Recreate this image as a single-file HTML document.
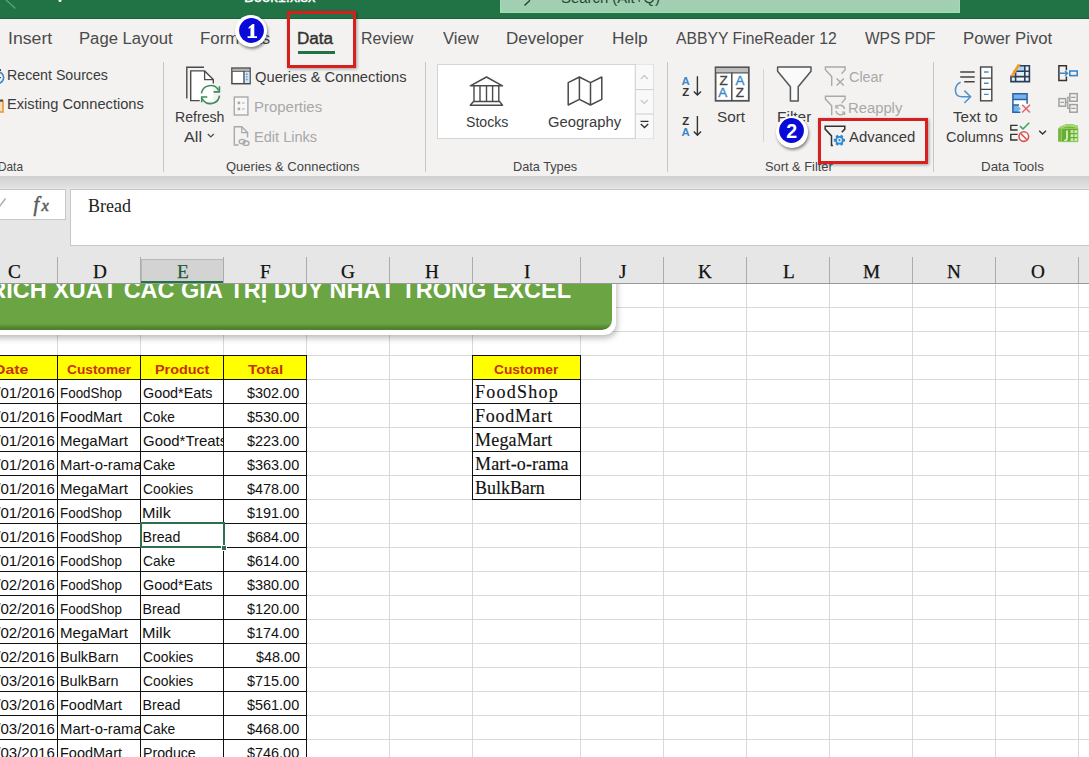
<!DOCTYPE html>
<html><head><meta charset="utf-8"><style>
*{margin:0;padding:0;box-sizing:border-box}
html,body{width:1089px;height:757px;overflow:hidden;background:#fff;font-family:"Liberation Sans",sans-serif}
body{position:relative}
.a{position:absolute;white-space:nowrap}
.tab{font-size:16.5px;color:#444;line-height:20px}
.lbl{font-size:15px;color:#3b3b3b;line-height:18px}
.dis{color:#a8a8a8}
.grp{font-size:13px;color:#444;line-height:16px}
.cell{font-size:13.3px;color:#111;line-height:24px;height:24px;overflow:hidden;padding-top:2px}
.ser{font-family:"Liberation Serif",serif}
</style></head><body>
<div class="a" style="left:0px;top:0px;width:1089px;height:18px;background:#217346"></div>
<div class="a" style="left:0px;top:18px;width:1089px;height:1px;background:#235c3c"></div>
<div class="a" style="left:243.82px;top:-3.20px;font-family:'Liberation Sans',sans-serif;font-size:15px;line-height:0;color:#fff;transform:scaleX(0.9835);transform-origin:0 0;-webkit-text-stroke:0.4px #fff;">Book1.xlsx</div>
<svg class="a" style="left:0;top:0" width="70" height="18"><path d="M5,-1 L15.5,8.5" stroke="#5aa877" stroke-width="1.2"/><circle cx="60" cy="0.6" r="1.5" fill="#e8fff0"/></svg>
<div class="a" style="left:500px;top:0px;width:460px;height:13px;background:linear-gradient(#a3ceb4,#9ed2b0);border:1px solid #a3dcb5;border-top:0"></div>
<div class="a" style="left:561.03px;top:-1.60px;font-family:'Liberation Sans',sans-serif;font-size:15.5px;line-height:0;color:#1b4a30;transform:scaleX(0.9606);transform-origin:0 0;">Search (Alt+Q)</div>
<svg class="a" style="left:500px;top:0" width="60" height="13"><path d="M24.5,5.6 L30,0.2" stroke="#1b4a30" stroke-width="1.4"/></svg>
<div class="a" style="left:0px;top:19px;width:1089px;height:157px;background:#f3f2f1"></div>
<div class="a" style="left:0px;top:19px;width:1089px;height:1px;background:#eaf4ea"></div>
<div class="a" style="left:7.51px;top:39.00px;font-family:'Liberation Sans',sans-serif;font-size:16px;line-height:0;color:#4a4a4a;transform:scaleX(1.1045);transform-origin:0 0;">Insert</div>
<div class="a" style="left:79.17px;top:39.00px;font-family:'Liberation Sans',sans-serif;font-size:16px;line-height:0;color:#4a4a4a;transform:scaleX(1.0420);transform-origin:0 0;">Page Layout</div>
<div class="a" style="left:200.05px;top:39.00px;font-family:'Liberation Sans',sans-serif;font-size:16px;line-height:0;color:#4a4a4a;transform:scaleX(1.0527);transform-origin:0 0;">Formulas</div>
<div class="a" style="left:361.23px;top:39.00px;font-family:'Liberation Sans',sans-serif;font-size:16px;line-height:0;color:#4a4a4a;transform:scaleX(0.9961);transform-origin:0 0;">Review</div>
<div class="a" style="left:443.22px;top:39.00px;font-family:'Liberation Sans',sans-serif;font-size:16px;line-height:0;color:#4a4a4a;transform:scaleX(1.0402);transform-origin:0 0;">View</div>
<div class="a" style="left:506.34px;top:39.00px;font-family:'Liberation Sans',sans-serif;font-size:16px;line-height:0;color:#4a4a4a;transform:scaleX(1.0636);transform-origin:0 0;">Developer</div>
<div class="a" style="left:611.61px;top:39.00px;font-family:'Liberation Sans',sans-serif;font-size:16px;line-height:0;color:#4a4a4a;transform:scaleX(1.0853);transform-origin:0 0;">Help</div>
<div class="a" style="left:676.32px;top:39.00px;font-family:'Liberation Sans',sans-serif;font-size:16px;line-height:0;color:#4a4a4a;transform:scaleX(0.9835);transform-origin:0 0;">ABBYY FineReader 12</div>
<div class="a" style="left:865.42px;top:39.00px;font-family:'Liberation Sans',sans-serif;font-size:16px;line-height:0;color:#4a4a4a;transform:scaleX(0.9673);transform-origin:0 0;">WPS PDF</div>
<div class="a" style="left:963.36px;top:39.00px;font-family:'Liberation Sans',sans-serif;font-size:16px;line-height:0;color:#4a4a4a;transform:scaleX(1.0452);transform-origin:0 0;">Power Pivot</div>
<div class="a" style="left:297.43px;top:39.00px;font-family:'Liberation Sans',sans-serif;font-size:16px;line-height:0;color:#333;transform:scaleX(1.0683);transform-origin:0 0;-webkit-text-stroke:0.4px #333;">Data</div>
<div class="a" style="left:298px;top:51px;width:37px;height:3px;background:#217346"></div>
<div class="a" style="left:162.5px;top:62px;width:1px;height:110px;background:#c8c6c4"></div>
<div class="a" style="left:425px;top:62px;width:1px;height:110px;background:#c8c6c4"></div>
<div class="a" style="left:667px;top:62px;width:1px;height:110px;background:#c8c6c4"></div>
<div class="a" style="left:933px;top:62px;width:1px;height:110px;background:#c8c6c4"></div>
<div class="a" style="left:763px;top:69px;width:1px;height:73px;background:#d6d4d2"></div>
<div class="a" style="left:-1.95px;top:167.00px;font-family:'Liberation Sans',sans-serif;font-size:12.2px;line-height:0;color:#444;transform:scaleX(0.9691);transform-origin:0 0;">Data</div>
<div class="a" style="left:226.41px;top:167.00px;font-family:'Liberation Sans',sans-serif;font-size:12.2px;line-height:0;color:#444;transform:scaleX(1.0659);transform-origin:0 0;">Queries &amp; Connections</div>
<div class="a" style="left:512.78px;top:167.00px;font-family:'Liberation Sans',sans-serif;font-size:12.2px;line-height:0;color:#444;transform:scaleX(1.0435);transform-origin:0 0;">Data Types</div>
<div class="a" style="left:765.42px;top:167.00px;font-family:'Liberation Sans',sans-serif;font-size:12.2px;line-height:0;color:#444;transform:scaleX(1.0531);transform-origin:0 0;">Sort &amp; Filter</div>
<div class="a" style="left:980.53px;top:167.00px;font-family:'Liberation Sans',sans-serif;font-size:12.2px;line-height:0;color:#444;transform:scaleX(1.0965);transform-origin:0 0;">Data Tools</div>
<div class="a" style="left:7.46px;top:74.75px;font-family:'Liberation Sans',sans-serif;font-size:14.7px;line-height:0;color:#3b3b3b;transform:scaleX(0.9660);transform-origin:0 0;">Recent Sources</div>
<div class="a" style="left:7.43px;top:103.60px;font-family:'Liberation Sans',sans-serif;font-size:14.7px;line-height:0;color:#3b3b3b;transform:scaleX(0.9977);transform-origin:0 0;">Existing Connections</div>
<div class="a" style="left:174.87px;top:117.00px;font-family:'Liberation Sans',sans-serif;font-size:14.7px;line-height:0;color:#3b3b3b;transform:scaleX(0.9611);transform-origin:0 0;">Refresh</div>
<div class="a" style="left:184.22px;top:137.00px;font-family:'Liberation Sans',sans-serif;font-size:14.7px;line-height:0;color:#3b3b3b;transform:scaleX(1.1054);transform-origin:0 0;">All</div>
<div class="a" style="left:254.84px;top:76.80px;font-family:'Liberation Sans',sans-serif;font-size:14.7px;line-height:0;color:#3b3b3b;transform:scaleX(1.0032);transform-origin:0 0;">Queries &amp; Connections</div>
<div class="a" style="left:254.30px;top:107.00px;font-family:'Liberation Sans',sans-serif;font-size:14.7px;line-height:0;color:#a8a8a8;transform:scaleX(1.0177);transform-origin:0 0;">Properties</div>
<div class="a" style="left:254.33px;top:137.00px;font-family:'Liberation Sans',sans-serif;font-size:14.7px;line-height:0;color:#a8a8a8;transform:scaleX(0.9914);transform-origin:0 0;">Edit Links</div>
<div class="a" style="left:436.5px;top:64px;width:217px;height:75px;background:#fff;border:1px solid #d4d4d4"></div>
<div class="a" style="left:465.66px;top:122.30px;font-family:'Liberation Sans',sans-serif;font-size:14.7px;line-height:0;color:#3b3b3b;transform:scaleX(0.9622);transform-origin:0 0;">Stocks</div>
<div class="a" style="left:547.56px;top:122.30px;font-family:'Liberation Sans',sans-serif;font-size:14.7px;line-height:0;color:#3b3b3b;transform:scaleX(1.0048);transform-origin:0 0;">Geography</div>
<div class="a" style="left:717.31px;top:117.00px;font-family:'Liberation Sans',sans-serif;font-size:14.7px;line-height:0;color:#3b3b3b;transform:scaleX(1.0433);transform-origin:0 0;">Sort</div>
<div class="a" style="left:777.36px;top:117.00px;font-family:'Liberation Sans',sans-serif;font-size:14.7px;line-height:0;color:#3b3b3b;transform:scaleX(1.0532);transform-origin:0 0;">Filter</div>
<div class="a" style="left:848.58px;top:77.30px;font-family:'Liberation Sans',sans-serif;font-size:14.7px;line-height:0;color:#a8a8a8;transform:scaleX(0.9794);transform-origin:0 0;">Clear</div>
<div class="a" style="left:848.12px;top:107.60px;font-family:'Liberation Sans',sans-serif;font-size:14.7px;line-height:0;color:#a8a8a8;transform:scaleX(1.0076);transform-origin:0 0;">Reapply</div>
<div class="a" style="left:849.23px;top:137.00px;font-family:'Liberation Sans',sans-serif;font-size:14.7px;line-height:0;color:#3b3b3b;transform:scaleX(1.0138);transform-origin:0 0;">Advanced</div>
<div class="a" style="left:952.80px;top:116.90px;font-family:'Liberation Sans',sans-serif;font-size:14.7px;line-height:0;color:#3b3b3b;transform:scaleX(1.0328);transform-origin:0 0;">Text to</div>
<div class="a" style="left:945.77px;top:136.70px;font-family:'Liberation Sans',sans-serif;font-size:14.7px;line-height:0;color:#3b3b3b;transform:scaleX(0.9887);transform-origin:0 0;">Columns</div>
<svg class="a" style="left:0;top:0" width="1089" height="180" viewBox="0 0 1089 180" fill="none"><circle cx="-2" cy="77.6" r="5.6" stroke="#3b88c8" stroke-width="1.6"/><line x1="-4" y1="77.6" x2="1" y2="77.6" stroke="#4a4a4a" stroke-width="1.2"/><rect x="-1" y="69" width="2" height="2" fill="#4a4a4a"/><rect x="-6" y="101" width="9" height="11" stroke="#e39b3c" stroke-width="1.6" fill="#f6dcb8"/><rect x="-6" y="99.5" width="9" height="2" fill="#4a4a4a"/><path d="M186.8,98.6 V67.3 H204" stroke="#4a4a4a" stroke-width="1.4"/><path d="M213.3,84 V79.6 L204.6,70.9 H190.7 V101 H213.3 Z" fill="#fff"/><path d="M199.7,100.6 H190.7 V70.9 H204.6 L213.3,79.6 V83.4" stroke="#4a4a4a" stroke-width="1.4"/><path d="M204.6,70.9 V79.6 H213.3" stroke="#4a4a4a" stroke-width="1.3"/><path d="M201.4,93.4 A9.2,9.2 0 0 1 218.6,90.4" stroke="#3d8c5c" stroke-width="1.6"/><path d="M219.4,86.2 V91.9 H213.6" stroke="#3d8c5c" stroke-width="1.6"/><path d="M219.5,95.6 A9.2,9.2 0 0 1 202.2,98.6" stroke="#3d8c5c" stroke-width="1.6"/><path d="M201.7,102.3 V97 H207.3" stroke="#3d8c5c" stroke-width="1.6"/><path d="M207.8,134 L210.8,137 L213.8,134" stroke="#4a4a4a" stroke-width="1.2"/><rect x="231.9" y="68.1" width="18.2" height="15.6" fill="#fff" stroke="#4a4a4a" stroke-width="1.5"/><rect x="232.6" y="68.8" width="16.8" height="2.2" fill="#b4b4b4"/><path d="M232,71.4 H250" stroke="#4a4a4a" stroke-width="0.9"/><rect x="244.6" y="71.8" width="4.8" height="11.2" fill="#d3e6f6"/><line x1="244" y1="71" x2="244" y2="83.8" stroke="#3d4f5f" stroke-width="1.4"/><path d="M246.8,73.6v1.4M246.8,76.2v1.4M246.8,78.8v1.4" stroke="#3b88c8" stroke-width="1.3"/><rect x="234.3" y="97" width="13.6" height="18" stroke="#a9a9a9" stroke-width="1.4" fill="#f7f7f7"/><rect x="237.6" y="101.6" width="2.6" height="2.6" fill="#a9a9a9"/><rect x="237.6" y="107.6" width="2.6" height="2.6" fill="#a9a9a9"/><path d="M242,103h2.6M242,109h2.6" stroke="#a9a9a9" stroke-width="1.1"/><path d="M238.5,145 H234.3 V126.7 H241.7 L247.6,132.6 V137.5" stroke="#a9a9a9" stroke-width="1.4" fill="none"/><path d="M241.7,126.7 V132.6 H247.6" stroke="#a9a9a9" stroke-width="1.2"/><ellipse cx="242.2" cy="141.6" rx="3" ry="2.2" stroke="#a9a9a9" stroke-width="1.3"/><ellipse cx="246" cy="143.2" rx="3" ry="2.2" stroke="#a9a9a9" stroke-width="1.3"/><path d="M470.3,85.8 L486.5,77 L502.5,85.8 Z" stroke="#4a4a4a" stroke-width="1.5" stroke-linejoin="round" fill="#fff"/><path d="M474,86v15.4M480,86v15.4M486.5,86v15.4M492.6,86v15.4M498.8,86v15.4" stroke="#4a4a4a" stroke-width="1.4"/><path d="M473.5,101.4 H499.5 L502.5,105.2 H470.3 Z" stroke="#4a4a4a" stroke-width="1.5" stroke-linejoin="round" fill="#fff"/><path d="M568.2,82.7 L579.4,77 L590.5,82.7 L601.8,77 V99.3 L590.5,105 L579.4,99.3 L568.2,105 Z M579.4,77 V99.3 M590.5,82.7 V105" stroke="#4a4a4a" stroke-width="1.5" stroke-linejoin="round"/><rect x="635.3" y="64.5" width="18" height="74" fill="#f9f9f9"/><path d="M635.3,64.3 V138.5 M635.3,89.6 H653.4 M635.3,114 H653.4" stroke="#cdcdcd" stroke-width="1"/><path d="M640.8,79 L644.3,75.6 L647.8,79" stroke="#c4c4c4" stroke-width="1.1"/><path d="M640.8,100 L644.3,103.4 L647.8,100" stroke="#c4c4c4" stroke-width="1.1"/><path d="M640.5,121.4 H648.5" stroke="#333" stroke-width="1.3"/><path d="M640.8,124 L644.5,127.6 L648.2,124" stroke="#333" stroke-width="1.4"/><text x="681.6" y="84.8" font-family="Liberation Sans" font-size="11.4px" font-weight="bold" fill="#3b88c8">A</text><text x="682.2" y="95.8" font-family="Liberation Sans" font-size="11.4px" font-weight="bold" fill="#333">Z</text><text x="682.2" y="124.6" font-family="Liberation Sans" font-size="11.4px" font-weight="bold" fill="#333">Z</text><text x="681.6" y="135.6" font-family="Liberation Sans" font-size="11.4px" font-weight="bold" fill="#3b88c8">A</text><path d="M697.4,76.3 V95 M693.8,91.4 L697.4,95 L701,91.4" stroke="#333" stroke-width="1.4"/><path d="M697.4,116 V135.2 M693.8,131.6 L697.4,135.2 L701,131.6" stroke="#333" stroke-width="1.4"/><rect x="715.6" y="67.3" width="33.2" height="33.5" fill="#fff" stroke="#555" stroke-width="1.8"/><rect x="716.4" y="68" width="31.6" height="4.6" fill="#bdbdbd"/><path d="M715.6,72.8 H748.8" stroke="#555" stroke-width="1.3"/><path d="M731.8,72.8 V100.8" stroke="#444" stroke-width="1.4"/><text x="719.4" y="84.7" font-family="Liberation Sans" font-size="13.4px" fill="#444" stroke="#444" stroke-width="0.35">Z</text><text x="718.2" y="97.4" font-family="Liberation Sans" font-size="13.4px" fill="#3b88c8" stroke="#3b88c8" stroke-width="0.35">A</text><text x="735.6" y="84.9" font-family="Liberation Sans" font-size="13.4px" fill="#3b88c8" stroke="#3b88c8" stroke-width="0.35">A</text><text x="735.8" y="97.4" font-family="Liberation Sans" font-size="13.4px" fill="#444" stroke="#444" stroke-width="0.35">Z</text><path d="M777.6,66.9 H811 V71.3 L798.2,86.8 V101 H790.4 V86.8 L777.6,71.3 Z" stroke="#555" stroke-width="1.5" stroke-linejoin="round" fill="#fafafa"/><path d="M831.6999999999999,86 V76.5 L825.4,69.8 V67 H845.1 V69.8 L841.6,73.8" stroke="#a9a9a9" stroke-width="1.4" stroke-linejoin="miter"/><path d="M836.6,78.6 L843.8,85.6 M843.8,78.6 L836.6,85.6" stroke="#a9a9a9" stroke-width="1.4"/><path d="M831.6999999999999,115.3 V105.8 L825.4,99.1 V96.3 H845.1 V99.1 L841.6,103.1" stroke="#a9a9a9" stroke-width="1.4" stroke-linejoin="miter"/><path d="M844.6,109 A4.6,4.6 0 0 0 836,107.6" stroke="#a9a9a9" stroke-width="1.4"/><path d="M836,111 A4.6,4.6 0 0 0 844.6,112.4" stroke="#a9a9a9" stroke-width="1.4"/><path d="M836,104.8 V108 H839" stroke="#a9a9a9" stroke-width="1.2"/><path d="M844.6,115 V112 H841.6" stroke="#a9a9a9" stroke-width="1.2"/><path d="M833,145.4 H831.5 V135.9 L825.15,129.1 V126.3 H844.8 V129.1 L841.8,132.3" stroke="#333" stroke-width="1.5" stroke-linejoin="miter"/><rect x="838" y="134.6" width="2.8" height="2.6" fill="#2f88d0" transform="rotate(30 839.4 140.2)"/><rect x="838" y="134.6" width="2.8" height="2.6" fill="#2f88d0" transform="rotate(90 839.4 140.2)"/><rect x="838" y="134.6" width="2.8" height="2.6" fill="#2f88d0" transform="rotate(150 839.4 140.2)"/><rect x="838" y="134.6" width="2.8" height="2.6" fill="#2f88d0" transform="rotate(210 839.4 140.2)"/><rect x="838" y="134.6" width="2.8" height="2.6" fill="#2f88d0" transform="rotate(270 839.4 140.2)"/><rect x="838" y="134.6" width="2.8" height="2.6" fill="#2f88d0" transform="rotate(330 839.4 140.2)"/><circle cx="839.4" cy="140.2" r="3.4" stroke="#2f88d0" stroke-width="1.8" fill="#dff0fb"/><circle cx="839.4" cy="140.2" r="1.1" fill="#2f88d0"/><path d="M960.2,71.9 H974.7 M960.2,77 H974.7 M964.2,81.8 H974.7" stroke="#444" stroke-width="1.5"/><rect x="980.6" y="67" width="11.2" height="33.8" fill="#fff" stroke="#444" stroke-width="1.4"/><path d="M980.6,78.2 H991.8 M980.6,89.4 H991.8" stroke="#444" stroke-width="1.3"/><path d="M984,72 H988.6 M984,83.2 H988.6 M984,94.4 H988.6" stroke="#4a8cc8" stroke-width="1.4"/><path d="M960.6,82.2 C953.5,85.5 953.5,96.7 962,96.7 H970.6 M964.4,90.6 L970.6,96.7 L964.4,103" stroke="#4d94cf" stroke-width="1.5"/><path d="M1016.5,71 H1024.8 V65.8 H1020 Z" fill="#a9d2f3"/><rect x="1016" y="71.6" width="8.4" height="4.6" fill="#dceefb"/><path d="M1017.5,65.8 H1029.4 V81.6 H1011 V75.6 M1013.5,71.2 H1029.4 M1011,76.6 H1029.4 M1015.6,71.2 V81.6 M1024.8,65.8 V81.6" stroke="#24405e" stroke-width="1.6"/><path d="M1017.6,64.2 L1020.8,64.2 L1013.4,76.4 L1010.2,76.4 Z" fill="#ef9a2a"/><rect x="1013" y="94" width="14" height="5.6" fill="#74b4ec"/><rect x="1013" y="99.8" width="14" height="5" fill="#fff"/><path d="M1013,105.2 H1017.6 L1020.8,108.7 L1017.6,112 H1013 Z" fill="#74b4ec"/><path d="M1020.4,112.2 H1012.9 V93.8 H1027.1 V103.8 M1012.9,99.6 H1027.1 M1012.9,105 H1019" stroke="#2a62a3" stroke-width="1.5"/><path d="M1022.2,104.8 L1030,112.6 M1030,104.8 L1022.2,112.6" stroke="#e26464" stroke-width="1.4"/><path d="M1017.6,125.4 H1010.8 V130 H1017.6 M1017.6,134.4 H1010.8 V140 H1017.6" stroke="#333" stroke-width="1.4"/><path d="M1020,126.2 L1023,129 L1029.2,122.8" stroke="#3ea262" stroke-width="1.6"/><circle cx="1023.8" cy="136.6" r="4.8" stroke="#e05050" stroke-width="1.6" fill="#fff"/><path d="M1020.6,133.4 L1027,139.8" stroke="#e05050" stroke-width="1.6"/><path d="M1039.2,130.8 L1042.6,134 L1046,130.8" stroke="#333" stroke-width="1.4"/><path d="M1066.4,70.2 V65.8 H1058.9 V80.6 H1066.4 V76.4" stroke="#333" stroke-width="1.5"/><rect x="1069.8" y="71" width="7.4" height="4.6" stroke="#3b88c8" stroke-width="1.6"/><path d="M1059.5,73.3 H1067.4 M1065,70.9 L1067.6,73.3 L1065,75.7" stroke="#3b88c8" stroke-width="1.4"/><rect x="1059" y="98.6" width="6.6" height="7.6" stroke="#a0a0a0" stroke-width="1.5"/><rect x="1069.8" y="93.6" width="7.4" height="7.6" stroke="#a0a0a0" stroke-width="1.5"/><rect x="1069.8" y="104.6" width="7.4" height="7.6" stroke="#a0a0a0" stroke-width="1.5"/><path d="M1065.6,102.4 H1067.8 V97.4 H1069.8 M1067.8,102.4 V108.4 H1069.8 M1060.5,102.4 H1064 M1071.2,97.4 H1075.6 M1071.2,108.4 H1075.6" stroke="#a0a0a0" stroke-width="1.3"/><path d="M1058.1,128.6 Q1066,121.2 1077.9,125.8 V141.7 H1058.1 Z" fill="#74b641"/><path d="M1058.1,128.6 Q1066,121.6 1077.9,125.8 V128.2 Q1068,124.6 1061.6,128.4 Z" fill="#a6da70"/><rect x="1061.6" y="128.4" width="16.3" height="13.3" fill="#68ab38" stroke="#96d062" stroke-width="0.9"/><rect x="1070.6" y="130.2" width="2.8" height="2.8" fill="#c9efa6"/><rect x="1070.6" y="134.2" width="2.8" height="2.8" fill="#c9efa6"/><rect x="1070.6" y="138.2" width="2.8" height="2.8" fill="#c9efa6"/><rect x="1074.4" y="130.2" width="2.8" height="2.8" fill="#c9efa6"/><rect x="1074.4" y="134.2" width="2.8" height="2.8" fill="#c9efa6"/><rect x="1074.4" y="138.2" width="2.8" height="2.8" fill="#c9efa6"/><path d="M1067,130.6 V138.6 Q1067,140.8 1064.4,140.2" stroke="#d6f4b6" stroke-width="1.8"/></svg>
<div class="a" style="left:0px;top:176px;width:1089px;height:13px;background:linear-gradient(#d0d0d0,#e3e3e3)"></div>
<div class="a" style="left:0px;top:188px;width:1089px;height:70px;background:#e6e6e6"></div>
<div class="a" style="left:-2px;top:188.8px;width:68px;height:31.6px;background:#fff;border:1px solid #c6c6c6"></div>
<div class="a" style="left:69.8px;top:188.8px;width:1030px;height:57.6px;background:#fff;border:1px solid #c6c6c6"></div>
<svg class="a" style="left:0;top:189px" width="66" height="31" fill="none"><path d="M-1,18 L5.5,9.5" stroke="#b0b0b0" stroke-width="1.6"/></svg>
<div class="a" style="left:33.4px;top:192.6px;font-family:'Liberation Serif',serif;font-style:italic;font-size:20px;line-height:22px;color:#5a5a5a;-webkit-text-stroke:0.5px #5a5a5a">f<span style="font-size:16.5px;margin-left:2.6px">x</span></div>
<div class="a" style="left:88px;top:194px;font-family:'Liberation Serif',serif;font-size:18px;color:#222;line-height:24px">Bread</div>
<div class="a" style="left:0px;top:246px;width:1089px;height:37px;background:#e6e6e6"></div>
<div class="a" style="left:57.0px;top:257px;width:1px;height:27px;background:#acacac"></div>
<div class="a" style="left:140.5px;top:258.5px;width:83.0px;height:25px;background:#d3d3d3;border:1px solid #b9b9b9;border-bottom:0"></div>
<div class="a" style="left:140.5px;top:280.5px;width:83.0px;height:3px;background:#217346"></div>
<div class="a" style="left:140.0px;top:257px;width:1px;height:27px;background:#acacac"></div>
<div class="a" style="left:223.0px;top:257px;width:1px;height:27px;background:#acacac"></div>
<div class="a" style="left:306.0px;top:257px;width:1px;height:27px;background:#acacac"></div>
<div class="a" style="left:389.0px;top:257px;width:1px;height:27px;background:#acacac"></div>
<div class="a" style="left:472.0px;top:257px;width:1px;height:27px;background:#acacac"></div>
<div class="a" style="left:580.0px;top:257px;width:1px;height:27px;background:#acacac"></div>
<div class="a" style="left:663.0px;top:257px;width:1px;height:27px;background:#acacac"></div>
<div class="a" style="left:746.0px;top:257px;width:1px;height:27px;background:#acacac"></div>
<div class="a" style="left:829.0px;top:257px;width:1px;height:27px;background:#acacac"></div>
<div class="a" style="left:912.0px;top:257px;width:1px;height:27px;background:#acacac"></div>
<div class="a" style="left:995.0px;top:257px;width:1px;height:27px;background:#acacac"></div>
<div class="a" style="left:1078.0px;top:257px;width:1px;height:27px;background:#acacac"></div>
<div class="a" style="left:7.95px;top:272.30px;font-family:'Liberation Serif',serif;font-size:18.3206106870229px;line-height:0;color:#111;transform:scaleX(1.0500);transform-origin:0 0;-webkit-text-stroke:0.25px #111;">C</div>
<div class="a" style="left:92.67px;top:272.30px;font-family:'Liberation Serif',serif;font-size:18.3206106870229px;line-height:0;color:#111;transform:scaleX(1.0500);transform-origin:0 0;-webkit-text-stroke:0.25px #111;">D</div>
<div class="a" style="left:176.83px;top:272.30px;font-family:'Liberation Serif',serif;font-size:18.3206106870229px;line-height:0;color:#1e5c3a;transform:scaleX(1.0500);transform-origin:0 0;-webkit-text-stroke:0.25px #1e5c3a;">E</div>
<div class="a" style="left:260.21px;top:272.30px;font-family:'Liberation Serif',serif;font-size:18.3206106870229px;line-height:0;color:#111;transform:scaleX(1.0500);transform-origin:0 0;-webkit-text-stroke:0.25px #111;">F</div>
<div class="a" style="left:341.48px;top:272.30px;font-family:'Liberation Serif',serif;font-size:18.3206106870229px;line-height:0;color:#111;transform:scaleX(1.0500);transform-origin:0 0;-webkit-text-stroke:0.25px #111;">G</div>
<div class="a" style="left:424.53px;top:272.30px;font-family:'Liberation Serif',serif;font-size:18.3206106870229px;line-height:0;color:#111;transform:scaleX(1.0500);transform-origin:0 0;-webkit-text-stroke:0.25px #111;">H</div>
<div class="a" style="left:523.78px;top:272.30px;font-family:'Liberation Serif',serif;font-size:18.3206106870229px;line-height:0;color:#111;transform:scaleX(1.0500);transform-origin:0 0;-webkit-text-stroke:0.25px #111;">I</div>
<div class="a" style="left:618.75px;top:272.30px;font-family:'Liberation Serif',serif;font-size:18.3206106870229px;line-height:0;color:#111;transform:scaleX(1.0500);transform-origin:0 0;-webkit-text-stroke:0.25px #111;">J</div>
<div class="a" style="left:698.38px;top:272.30px;font-family:'Liberation Serif',serif;font-size:18.3206106870229px;line-height:0;color:#111;transform:scaleX(1.0500);transform-origin:0 0;-webkit-text-stroke:0.25px #111;">K</div>
<div class="a" style="left:782.92px;top:272.30px;font-family:'Liberation Serif',serif;font-size:18.3206106870229px;line-height:0;color:#111;transform:scaleX(1.0500);transform-origin:0 0;-webkit-text-stroke:0.25px #111;">L</div>
<div class="a" style="left:862.94px;top:272.30px;font-family:'Liberation Serif',serif;font-size:18.3206106870229px;line-height:0;color:#111;transform:scaleX(1.0500);transform-origin:0 0;-webkit-text-stroke:0.25px #111;">M</div>
<div class="a" style="left:947.48px;top:272.30px;font-family:'Liberation Serif',serif;font-size:18.3206106870229px;line-height:0;color:#111;transform:scaleX(1.0500);transform-origin:0 0;-webkit-text-stroke:0.25px #111;">N</div>
<div class="a" style="left:1030.57px;top:272.30px;font-family:'Liberation Serif',serif;font-size:18.3206106870229px;line-height:0;color:#111;transform:scaleX(1.0500);transform-origin:0 0;-webkit-text-stroke:0.25px #111;">O</div>
<div class="a" style="left:1115.26px;top:272.30px;font-family:'Liberation Serif',serif;font-size:18.3206106870229px;line-height:0;color:#111;transform:scaleX(1.0500);transform-origin:0 0;-webkit-text-stroke:0.25px #111;">P</div>
<div class="a" style="left:0;top:283px;width:1089px;height:474px;overflow:hidden;background:#fff">
<div class="a" style="left:0px;top:23.5px;width:1089px;height:1px;background:#d9d9d9"></div>
<div class="a" style="left:0px;top:47.5px;width:1089px;height:1px;background:#d9d9d9"></div>
<div class="a" style="left:0px;top:71.5px;width:1089px;height:1px;background:#d9d9d9"></div>
<div class="a" style="left:0px;top:95.5px;width:1089px;height:1px;background:#d9d9d9"></div>
<div class="a" style="left:0px;top:119.5px;width:1089px;height:1px;background:#d9d9d9"></div>
<div class="a" style="left:0px;top:143.5px;width:1089px;height:1px;background:#d9d9d9"></div>
<div class="a" style="left:0px;top:167.5px;width:1089px;height:1px;background:#d9d9d9"></div>
<div class="a" style="left:0px;top:191.5px;width:1089px;height:1px;background:#d9d9d9"></div>
<div class="a" style="left:0px;top:215.5px;width:1089px;height:1px;background:#d9d9d9"></div>
<div class="a" style="left:0px;top:239.5px;width:1089px;height:1px;background:#d9d9d9"></div>
<div class="a" style="left:0px;top:263.5px;width:1089px;height:1px;background:#d9d9d9"></div>
<div class="a" style="left:0px;top:287.5px;width:1089px;height:1px;background:#d9d9d9"></div>
<div class="a" style="left:0px;top:311.5px;width:1089px;height:1px;background:#d9d9d9"></div>
<div class="a" style="left:0px;top:335.5px;width:1089px;height:1px;background:#d9d9d9"></div>
<div class="a" style="left:0px;top:359.5px;width:1089px;height:1px;background:#d9d9d9"></div>
<div class="a" style="left:0px;top:383.5px;width:1089px;height:1px;background:#d9d9d9"></div>
<div class="a" style="left:0px;top:407.5px;width:1089px;height:1px;background:#d9d9d9"></div>
<div class="a" style="left:0px;top:431.5px;width:1089px;height:1px;background:#d9d9d9"></div>
<div class="a" style="left:0px;top:455.5px;width:1089px;height:1px;background:#d9d9d9"></div>
<div class="a" style="left:0px;top:479.5px;width:1089px;height:1px;background:#d9d9d9"></div>
<div class="a" style="left:0px;top:503.5px;width:1089px;height:1px;background:#d9d9d9"></div>
<div class="a" style="left:57.0px;top:0px;width:1px;height:474px;background:#d9d9d9"></div>
<div class="a" style="left:140.0px;top:0px;width:1px;height:474px;background:#d9d9d9"></div>
<div class="a" style="left:223.0px;top:0px;width:1px;height:474px;background:#d9d9d9"></div>
<div class="a" style="left:306.0px;top:0px;width:1px;height:474px;background:#d9d9d9"></div>
<div class="a" style="left:389.0px;top:0px;width:1px;height:474px;background:#d9d9d9"></div>
<div class="a" style="left:472.0px;top:0px;width:1px;height:474px;background:#d9d9d9"></div>
<div class="a" style="left:580.0px;top:0px;width:1px;height:474px;background:#d9d9d9"></div>
<div class="a" style="left:663.0px;top:0px;width:1px;height:474px;background:#d9d9d9"></div>
<div class="a" style="left:746.0px;top:0px;width:1px;height:474px;background:#d9d9d9"></div>
<div class="a" style="left:829.0px;top:0px;width:1px;height:474px;background:#d9d9d9"></div>
<div class="a" style="left:912.0px;top:0px;width:1px;height:474px;background:#d9d9d9"></div>
<div class="a" style="left:995.0px;top:0px;width:1px;height:474px;background:#d9d9d9"></div>
<div class="a" style="left:1078.0px;top:0px;width:1px;height:474px;background:#d9d9d9"></div>
<div class="a" style="left:-40px;top:-30px;width:656px;height:81.75px;background:#fff;border-radius:0 0 12px 0;box-shadow:1px 3px 6px rgba(0,0,0,.28)"></div>
<div class="a" style="left:-40px;top:-30px;width:652px;height:76.5px;background:linear-gradient(#6aa443 0%,#6aa443 91.5%,#5e9539 94.5%,#4e7c2d 98.5%,#56873a 100%);border-radius:0 0 10px 0"></div>
<div class="a" style="left:-25.18px;top:7.15px;font-size:23.505px;line-height:0;font-weight:bold;color:#fff">TRÍCH XUẤT CÁC GIÁ TRỊ DUY NHẤT TRONG EXCEL</div>
<div class="a" style="left:-30px;top:72px;width:336.5px;height:24px;background:#ffff00"></div>
<div class="a" style="left:-5.53px;top:87.00px;font-family:'Liberation Sans',sans-serif;font-size:13.2px;line-height:0;color:#c8300e;font-weight:bold;transform:scaleX(1.1996);transform-origin:0 0;">Date</div>
<div class="a" style="left:67.35px;top:87.00px;font-family:'Liberation Sans',sans-serif;font-size:13.2px;line-height:0;color:#c8300e;font-weight:bold;transform:scaleX(1.0407);transform-origin:0 0;">Customer</div>
<div class="a" style="left:154.96px;top:87.00px;font-family:'Liberation Sans',sans-serif;font-size:13.2px;line-height:0;color:#c8300e;font-weight:bold;transform:scaleX(1.0913);transform-origin:0 0;">Product</div>
<div class="a" style="left:248.25px;top:87.00px;font-family:'Liberation Sans',sans-serif;font-size:13.2px;line-height:0;color:#c8300e;font-weight:bold;transform:scaleX(1.1517);transform-origin:0 0;">Total</div>
<div class="a" style="left:-11.94px;top:109.80px;font-family:'Liberation Sans',sans-serif;font-size:14.2px;line-height:0;color:#111;transform:scaleX(1.0573);transform-origin:0 0;">1/01/2016</div>
<div class="a" style="left:57.5px;top:96px;width:82.5px;height:24px;overflow:hidden">
<div class="a" style="left:2.43px;top:13.80px;font-family:'Liberation Sans',sans-serif;font-size:14.2px;line-height:0;color:#111;transform:scaleX(0.9447);transform-origin:0 0;">FoodShop</div>
</div>
<div class="a" style="left:140.5px;top:96px;width:82.5px;height:24px;overflow:hidden">
<div class="a" style="left:2.48px;top:13.80px;font-family:'Liberation Sans',sans-serif;font-size:14.2px;line-height:0;color:#111;transform:scaleX(1.0111);transform-origin:0 0;">Good*Eats</div>
</div>
<div class="a" style="left:247.26px;top:109.80px;font-family:'Liberation Sans',sans-serif;font-size:14.2px;line-height:0;color:#111;transform:scaleX(1.0173);transform-origin:0 0;">$302.00</div>
<div class="a" style="left:-11.94px;top:133.80px;font-family:'Liberation Sans',sans-serif;font-size:14.2px;line-height:0;color:#111;transform:scaleX(1.0573);transform-origin:0 0;">1/01/2016</div>
<div class="a" style="left:57.5px;top:120px;width:82.5px;height:24px;overflow:hidden">
<div class="a" style="left:2.34px;top:13.80px;font-family:'Liberation Sans',sans-serif;font-size:14.2px;line-height:0;color:#111;transform:scaleX(1.0219);transform-origin:0 0;">FoodMart</div>
</div>
<div class="a" style="left:140.5px;top:120px;width:82.5px;height:24px;overflow:hidden">
<div class="a" style="left:2.52px;top:13.80px;font-family:'Liberation Sans',sans-serif;font-size:14.2px;line-height:0;color:#111;transform:scaleX(0.9620);transform-origin:0 0;">Coke</div>
</div>
<div class="a" style="left:247.26px;top:133.80px;font-family:'Liberation Sans',sans-serif;font-size:14.2px;line-height:0;color:#111;transform:scaleX(1.0173);transform-origin:0 0;">$530.00</div>
<div class="a" style="left:-11.94px;top:157.80px;font-family:'Liberation Sans',sans-serif;font-size:14.2px;line-height:0;color:#111;transform:scaleX(1.0573);transform-origin:0 0;">1/01/2016</div>
<div class="a" style="left:57.5px;top:144px;width:82.5px;height:24px;overflow:hidden">
<div class="a" style="left:2.29px;top:13.80px;font-family:'Liberation Sans',sans-serif;font-size:14.2px;line-height:0;color:#111;transform:scaleX(1.0623);transform-origin:0 0;">MegaMart</div>
</div>
<div class="a" style="left:140.5px;top:144px;width:82.5px;height:24px;overflow:hidden">
<div class="a" style="left:2.45px;top:13.80px;font-family:'Liberation Sans',sans-serif;font-size:14.2px;line-height:0;color:#111;transform:scaleX(1.0541);transform-origin:0 0;">Good*Treats</div>
</div>
<div class="a" style="left:247.26px;top:157.80px;font-family:'Liberation Sans',sans-serif;font-size:14.2px;line-height:0;color:#111;transform:scaleX(1.0173);transform-origin:0 0;">$223.00</div>
<div class="a" style="left:-11.94px;top:181.80px;font-family:'Liberation Sans',sans-serif;font-size:14.2px;line-height:0;color:#111;transform:scaleX(1.0573);transform-origin:0 0;">1/01/2016</div>
<div class="a" style="left:57.5px;top:168px;width:82.5px;height:24px;overflow:hidden">
<div class="a" style="left:2.31px;top:13.80px;font-family:'Liberation Sans',sans-serif;font-size:14.2px;line-height:0;color:#111;transform:scaleX(1.0472);transform-origin:0 0;">Mart-o-rama</div>
</div>
<div class="a" style="left:140.5px;top:168px;width:82.5px;height:24px;overflow:hidden">
<div class="a" style="left:2.51px;top:13.80px;font-family:'Liberation Sans',sans-serif;font-size:14.2px;line-height:0;color:#111;transform:scaleX(0.9746);transform-origin:0 0;">Cake</div>
</div>
<div class="a" style="left:247.26px;top:181.80px;font-family:'Liberation Sans',sans-serif;font-size:14.2px;line-height:0;color:#111;transform:scaleX(1.0173);transform-origin:0 0;">$363.00</div>
<div class="a" style="left:-11.94px;top:205.80px;font-family:'Liberation Sans',sans-serif;font-size:14.2px;line-height:0;color:#111;transform:scaleX(1.0573);transform-origin:0 0;">1/01/2016</div>
<div class="a" style="left:57.5px;top:192px;width:82.5px;height:24px;overflow:hidden">
<div class="a" style="left:2.29px;top:13.80px;font-family:'Liberation Sans',sans-serif;font-size:14.2px;line-height:0;color:#111;transform:scaleX(1.0623);transform-origin:0 0;">MegaMart</div>
</div>
<div class="a" style="left:140.5px;top:192px;width:82.5px;height:24px;overflow:hidden">
<div class="a" style="left:2.51px;top:13.80px;font-family:'Liberation Sans',sans-serif;font-size:14.2px;line-height:0;color:#111;transform:scaleX(0.9775);transform-origin:0 0;">Cookies</div>
</div>
<div class="a" style="left:247.26px;top:205.80px;font-family:'Liberation Sans',sans-serif;font-size:14.2px;line-height:0;color:#111;transform:scaleX(1.0173);transform-origin:0 0;">$478.00</div>
<div class="a" style="left:-11.94px;top:229.80px;font-family:'Liberation Sans',sans-serif;font-size:14.2px;line-height:0;color:#111;transform:scaleX(1.0573);transform-origin:0 0;">1/01/2016</div>
<div class="a" style="left:57.5px;top:216px;width:82.5px;height:24px;overflow:hidden">
<div class="a" style="left:2.43px;top:13.80px;font-family:'Liberation Sans',sans-serif;font-size:14.2px;line-height:0;color:#111;transform:scaleX(0.9447);transform-origin:0 0;">FoodShop</div>
</div>
<div class="a" style="left:140.5px;top:216px;width:82.5px;height:24px;overflow:hidden">
<div class="a" style="left:1.90px;top:13.80px;font-family:'Liberation Sans',sans-serif;font-size:14.2px;line-height:0;color:#111;transform:scaleX(1.1425);transform-origin:0 0;">Milk</div>
</div>
<div class="a" style="left:247.26px;top:229.80px;font-family:'Liberation Sans',sans-serif;font-size:14.2px;line-height:0;color:#111;transform:scaleX(1.0173);transform-origin:0 0;">$191.00</div>
<div class="a" style="left:-11.94px;top:253.80px;font-family:'Liberation Sans',sans-serif;font-size:14.2px;line-height:0;color:#111;transform:scaleX(1.0573);transform-origin:0 0;">1/01/2016</div>
<div class="a" style="left:57.5px;top:240px;width:82.5px;height:24px;overflow:hidden">
<div class="a" style="left:2.43px;top:13.80px;font-family:'Liberation Sans',sans-serif;font-size:14.2px;line-height:0;color:#111;transform:scaleX(0.9447);transform-origin:0 0;">FoodShop</div>
</div>
<div class="a" style="left:140.5px;top:240px;width:82.5px;height:24px;overflow:hidden">
<div class="a" style="left:2.06px;top:13.80px;font-family:'Liberation Sans',sans-serif;font-size:14.2px;line-height:0;color:#111;">Bread</div>
</div>
<div class="a" style="left:247.26px;top:253.80px;font-family:'Liberation Sans',sans-serif;font-size:14.2px;line-height:0;color:#111;transform:scaleX(1.0173);transform-origin:0 0;">$684.00</div>
<div class="a" style="left:-11.94px;top:277.80px;font-family:'Liberation Sans',sans-serif;font-size:14.2px;line-height:0;color:#111;transform:scaleX(1.0573);transform-origin:0 0;">1/01/2016</div>
<div class="a" style="left:57.5px;top:264px;width:82.5px;height:24px;overflow:hidden">
<div class="a" style="left:2.43px;top:13.80px;font-family:'Liberation Sans',sans-serif;font-size:14.2px;line-height:0;color:#111;transform:scaleX(0.9447);transform-origin:0 0;">FoodShop</div>
</div>
<div class="a" style="left:140.5px;top:264px;width:82.5px;height:24px;overflow:hidden">
<div class="a" style="left:2.51px;top:13.80px;font-family:'Liberation Sans',sans-serif;font-size:14.2px;line-height:0;color:#111;transform:scaleX(0.9746);transform-origin:0 0;">Cake</div>
</div>
<div class="a" style="left:247.26px;top:277.80px;font-family:'Liberation Sans',sans-serif;font-size:14.2px;line-height:0;color:#111;transform:scaleX(1.0173);transform-origin:0 0;">$614.00</div>
<div class="a" style="left:-11.94px;top:301.80px;font-family:'Liberation Sans',sans-serif;font-size:14.2px;line-height:0;color:#111;transform:scaleX(1.0573);transform-origin:0 0;">1/02/2016</div>
<div class="a" style="left:57.5px;top:288px;width:82.5px;height:24px;overflow:hidden">
<div class="a" style="left:2.43px;top:13.80px;font-family:'Liberation Sans',sans-serif;font-size:14.2px;line-height:0;color:#111;transform:scaleX(0.9447);transform-origin:0 0;">FoodShop</div>
</div>
<div class="a" style="left:140.5px;top:288px;width:82.5px;height:24px;overflow:hidden">
<div class="a" style="left:2.48px;top:13.80px;font-family:'Liberation Sans',sans-serif;font-size:14.2px;line-height:0;color:#111;transform:scaleX(1.0111);transform-origin:0 0;">Good*Eats</div>
</div>
<div class="a" style="left:247.26px;top:301.80px;font-family:'Liberation Sans',sans-serif;font-size:14.2px;line-height:0;color:#111;transform:scaleX(1.0173);transform-origin:0 0;">$380.00</div>
<div class="a" style="left:-11.94px;top:325.80px;font-family:'Liberation Sans',sans-serif;font-size:14.2px;line-height:0;color:#111;transform:scaleX(1.0573);transform-origin:0 0;">1/02/2016</div>
<div class="a" style="left:57.5px;top:312px;width:82.5px;height:24px;overflow:hidden">
<div class="a" style="left:2.43px;top:13.80px;font-family:'Liberation Sans',sans-serif;font-size:14.2px;line-height:0;color:#111;transform:scaleX(0.9447);transform-origin:0 0;">FoodShop</div>
</div>
<div class="a" style="left:140.5px;top:312px;width:82.5px;height:24px;overflow:hidden">
<div class="a" style="left:2.06px;top:13.80px;font-family:'Liberation Sans',sans-serif;font-size:14.2px;line-height:0;color:#111;">Bread</div>
</div>
<div class="a" style="left:247.26px;top:325.80px;font-family:'Liberation Sans',sans-serif;font-size:14.2px;line-height:0;color:#111;transform:scaleX(1.0173);transform-origin:0 0;">$120.00</div>
<div class="a" style="left:-11.94px;top:349.80px;font-family:'Liberation Sans',sans-serif;font-size:14.2px;line-height:0;color:#111;transform:scaleX(1.0573);transform-origin:0 0;">1/02/2016</div>
<div class="a" style="left:57.5px;top:336px;width:82.5px;height:24px;overflow:hidden">
<div class="a" style="left:2.29px;top:13.80px;font-family:'Liberation Sans',sans-serif;font-size:14.2px;line-height:0;color:#111;transform:scaleX(1.0623);transform-origin:0 0;">MegaMart</div>
</div>
<div class="a" style="left:140.5px;top:336px;width:82.5px;height:24px;overflow:hidden">
<div class="a" style="left:1.90px;top:13.80px;font-family:'Liberation Sans',sans-serif;font-size:14.2px;line-height:0;color:#111;transform:scaleX(1.1425);transform-origin:0 0;">Milk</div>
</div>
<div class="a" style="left:247.26px;top:349.80px;font-family:'Liberation Sans',sans-serif;font-size:14.2px;line-height:0;color:#111;transform:scaleX(1.0173);transform-origin:0 0;">$174.00</div>
<div class="a" style="left:-11.94px;top:373.80px;font-family:'Liberation Sans',sans-serif;font-size:14.2px;line-height:0;color:#111;transform:scaleX(1.0573);transform-origin:0 0;">1/02/2016</div>
<div class="a" style="left:57.5px;top:360px;width:82.5px;height:24px;overflow:hidden">
<div class="a" style="left:2.35px;top:13.80px;font-family:'Liberation Sans',sans-serif;font-size:14.2px;line-height:0;color:#111;transform:scaleX(1.0158);transform-origin:0 0;">BulkBarn</div>
</div>
<div class="a" style="left:140.5px;top:360px;width:82.5px;height:24px;overflow:hidden">
<div class="a" style="left:2.51px;top:13.80px;font-family:'Liberation Sans',sans-serif;font-size:14.2px;line-height:0;color:#111;transform:scaleX(0.9775);transform-origin:0 0;">Cookies</div>
</div>
<div class="a" style="left:255.56px;top:373.80px;font-family:'Liberation Sans',sans-serif;font-size:14.2px;line-height:0;color:#111;transform:scaleX(1.0107);transform-origin:0 0;">$48.00</div>
<div class="a" style="left:-11.94px;top:397.80px;font-family:'Liberation Sans',sans-serif;font-size:14.2px;line-height:0;color:#111;transform:scaleX(1.0573);transform-origin:0 0;">1/03/2016</div>
<div class="a" style="left:57.5px;top:384px;width:82.5px;height:24px;overflow:hidden">
<div class="a" style="left:2.35px;top:13.80px;font-family:'Liberation Sans',sans-serif;font-size:14.2px;line-height:0;color:#111;transform:scaleX(1.0158);transform-origin:0 0;">BulkBarn</div>
</div>
<div class="a" style="left:140.5px;top:384px;width:82.5px;height:24px;overflow:hidden">
<div class="a" style="left:2.51px;top:13.80px;font-family:'Liberation Sans',sans-serif;font-size:14.2px;line-height:0;color:#111;transform:scaleX(0.9775);transform-origin:0 0;">Cookies</div>
</div>
<div class="a" style="left:247.26px;top:397.80px;font-family:'Liberation Sans',sans-serif;font-size:14.2px;line-height:0;color:#111;transform:scaleX(1.0173);transform-origin:0 0;">$715.00</div>
<div class="a" style="left:-11.94px;top:421.80px;font-family:'Liberation Sans',sans-serif;font-size:14.2px;line-height:0;color:#111;transform:scaleX(1.0573);transform-origin:0 0;">1/03/2016</div>
<div class="a" style="left:57.5px;top:408px;width:82.5px;height:24px;overflow:hidden">
<div class="a" style="left:2.34px;top:13.80px;font-family:'Liberation Sans',sans-serif;font-size:14.2px;line-height:0;color:#111;transform:scaleX(1.0219);transform-origin:0 0;">FoodMart</div>
</div>
<div class="a" style="left:140.5px;top:408px;width:82.5px;height:24px;overflow:hidden">
<div class="a" style="left:2.06px;top:13.80px;font-family:'Liberation Sans',sans-serif;font-size:14.2px;line-height:0;color:#111;">Bread</div>
</div>
<div class="a" style="left:247.26px;top:421.80px;font-family:'Liberation Sans',sans-serif;font-size:14.2px;line-height:0;color:#111;transform:scaleX(1.0173);transform-origin:0 0;">$561.00</div>
<div class="a" style="left:-11.94px;top:445.80px;font-family:'Liberation Sans',sans-serif;font-size:14.2px;line-height:0;color:#111;transform:scaleX(1.0573);transform-origin:0 0;">1/03/2016</div>
<div class="a" style="left:57.5px;top:432px;width:82.5px;height:24px;overflow:hidden">
<div class="a" style="left:2.31px;top:13.80px;font-family:'Liberation Sans',sans-serif;font-size:14.2px;line-height:0;color:#111;transform:scaleX(1.0472);transform-origin:0 0;">Mart-o-rama</div>
</div>
<div class="a" style="left:140.5px;top:432px;width:82.5px;height:24px;overflow:hidden">
<div class="a" style="left:2.51px;top:13.80px;font-family:'Liberation Sans',sans-serif;font-size:14.2px;line-height:0;color:#111;transform:scaleX(0.9746);transform-origin:0 0;">Cake</div>
</div>
<div class="a" style="left:247.26px;top:445.80px;font-family:'Liberation Sans',sans-serif;font-size:14.2px;line-height:0;color:#111;transform:scaleX(1.0173);transform-origin:0 0;">$468.00</div>
<div class="a" style="left:-11.94px;top:469.80px;font-family:'Liberation Sans',sans-serif;font-size:14.2px;line-height:0;color:#111;transform:scaleX(1.0573);transform-origin:0 0;">1/03/2016</div>
<div class="a" style="left:57.5px;top:456px;width:82.5px;height:24px;overflow:hidden">
<div class="a" style="left:2.34px;top:13.80px;font-family:'Liberation Sans',sans-serif;font-size:14.2px;line-height:0;color:#111;transform:scaleX(1.0219);transform-origin:0 0;">FoodMart</div>
</div>
<div class="a" style="left:140.5px;top:456px;width:82.5px;height:24px;overflow:hidden">
<div class="a" style="left:2.07px;top:13.80px;font-family:'Liberation Sans',sans-serif;font-size:14.2px;line-height:0;color:#111;transform:scaleX(0.9977);transform-origin:0 0;">Produce</div>
</div>
<div class="a" style="left:247.26px;top:469.80px;font-family:'Liberation Sans',sans-serif;font-size:14.2px;line-height:0;color:#111;transform:scaleX(1.0173);transform-origin:0 0;">$746.00</div>
<div class="a" style="left:-30px;top:71.5px;width:337px;height:1px;background:#111"></div>
<div class="a" style="left:-30px;top:95.5px;width:337px;height:1px;background:#111"></div>
<div class="a" style="left:-30px;top:119.5px;width:337px;height:1px;background:#111"></div>
<div class="a" style="left:-30px;top:143.5px;width:337px;height:1px;background:#111"></div>
<div class="a" style="left:-30px;top:167.5px;width:337px;height:1px;background:#111"></div>
<div class="a" style="left:-30px;top:191.5px;width:337px;height:1px;background:#111"></div>
<div class="a" style="left:-30px;top:215.5px;width:337px;height:1px;background:#111"></div>
<div class="a" style="left:-30px;top:239.5px;width:337px;height:1px;background:#111"></div>
<div class="a" style="left:-30px;top:263.5px;width:337px;height:1px;background:#111"></div>
<div class="a" style="left:-30px;top:287.5px;width:337px;height:1px;background:#111"></div>
<div class="a" style="left:-30px;top:311.5px;width:337px;height:1px;background:#111"></div>
<div class="a" style="left:-30px;top:335.5px;width:337px;height:1px;background:#111"></div>
<div class="a" style="left:-30px;top:359.5px;width:337px;height:1px;background:#111"></div>
<div class="a" style="left:-30px;top:383.5px;width:337px;height:1px;background:#111"></div>
<div class="a" style="left:-30px;top:407.5px;width:337px;height:1px;background:#111"></div>
<div class="a" style="left:-30px;top:431.5px;width:337px;height:1px;background:#111"></div>
<div class="a" style="left:-30px;top:455.5px;width:337px;height:1px;background:#111"></div>
<div class="a" style="left:-30px;top:479.5px;width:337px;height:1px;background:#111"></div>
<div class="a" style="left:57.0px;top:72px;width:1px;height:474px;background:#111"></div>
<div class="a" style="left:140.0px;top:72px;width:1px;height:474px;background:#111"></div>
<div class="a" style="left:223.0px;top:72px;width:1px;height:474px;background:#111"></div>
<div class="a" style="left:306.0px;top:72px;width:1px;height:474px;background:#111"></div>
<div class="a" style="left:472px;top:72px;width:108.5px;height:24px;background:#ffff00"></div>
<div class="a" style="left:494.05px;top:87.00px;font-family:'Liberation Sans',sans-serif;font-size:13.2px;line-height:0;color:#c8300e;font-weight:bold;transform:scaleX(1.0440);transform-origin:0 0;">Customer</div>
<div class="a" style="left:475.06px;top:109.20px;font-family:'Liberation Serif',serif;font-size:18px;line-height:0;color:#111;letter-spacing:1.226px;-webkit-text-stroke:0.15px #111;">FoodShop</div>
<div class="a" style="left:475.06px;top:133.20px;font-family:'Liberation Serif',serif;font-size:18px;line-height:0;color:#111;letter-spacing:0.746px;-webkit-text-stroke:0.15px #111;">FoodMart</div>
<div class="a" style="left:475.06px;top:157.20px;font-family:'Liberation Serif',serif;font-size:18px;line-height:0;color:#111;letter-spacing:0.167px;-webkit-text-stroke:0.15px #111;">MegaMart</div>
<div class="a" style="left:475.06px;top:181.20px;font-family:'Liberation Serif',serif;font-size:18px;line-height:0;color:#111;letter-spacing:0.153px;-webkit-text-stroke:0.15px #111;">Mart-o-rama</div>
<div class="a" style="left:475.06px;top:205.20px;font-family:'Liberation Serif',serif;font-size:18px;line-height:0;color:#111;letter-spacing:-0.044px;-webkit-text-stroke:0.15px #111;">BulkBarn</div>
<div class="a" style="left:472px;top:71.5px;width:109px;height:1px;background:#111"></div>
<div class="a" style="left:472px;top:95.5px;width:109px;height:1px;background:#111"></div>
<div class="a" style="left:472px;top:119.5px;width:109px;height:1px;background:#111"></div>
<div class="a" style="left:472px;top:143.5px;width:109px;height:1px;background:#111"></div>
<div class="a" style="left:472px;top:167.5px;width:109px;height:1px;background:#111"></div>
<div class="a" style="left:472px;top:191.5px;width:109px;height:1px;background:#111"></div>
<div class="a" style="left:472px;top:215.5px;width:109px;height:1px;background:#111"></div>
<div class="a" style="left:472.0px;top:72px;width:1px;height:144px;background:#111"></div>
<div class="a" style="left:580.0px;top:72px;width:1px;height:144px;background:#111"></div>
<div class="a" style="left:139.5px;top:239px;width:85px;height:26px;border:2px solid #2e6f4e"></div>
<div class="a" style="left:221px;top:262px;width:5.5px;height:5.5px;background:#2e6f4e;border:1px solid #fff"></div>
</div>
<div class="a" style="left:0px;top:283px;width:1089px;height:1px;background:#999"></div>
<div class="a" style="left:287px;top:11px;width:68.5px;height:56.5px;border:3px solid #d61f1f;box-shadow:1px 1px 3px rgba(0,0,0,.35)"></div>
<div class="a" style="left:818px;top:118px;width:110px;height:45.5px;border:3px solid #d61f1f;box-shadow:1px 1px 3px rgba(0,0,0,.35)"></div>
<div class="a" style="left:235.29999999999998px;top:15.1px;width:31.8px;height:31.8px;border-radius:50%;background:#fff;box-shadow:1px 2px 3px rgba(0,0,0,.45)"></div>
<svg class="a" style="left:238.5px;top:17.9px" width="25" height="25" viewBox="0 0 25 25"><circle cx="12.5" cy="12.5" r="12.4" fill="#0a0ad8"/><path d="M9.6,9.2 L13.6,6.1 H15.3 V18.2 H18 V20.1 H8.6 V18.2 H11.5 V9.6 L9.6,10.9 Z" fill="#fff"/></svg>
<div class="a" style="left:776.3000000000001px;top:115.9px;width:31.8px;height:31.8px;border-radius:50%;background:#fff;box-shadow:1px 2px 3px rgba(0,0,0,.45)"></div>
<svg class="a" style="left:779.4px;top:118.4px" width="25" height="25" viewBox="0 0 25 25"><circle cx="12.5" cy="12.5" r="12.4" fill="#0a0ad8"/><text x="12.6" y="19.6" text-anchor="middle" font-family="Liberation Sans" font-weight="bold" font-size="19.6" fill="#fff">2</text></svg>
</body></html>
